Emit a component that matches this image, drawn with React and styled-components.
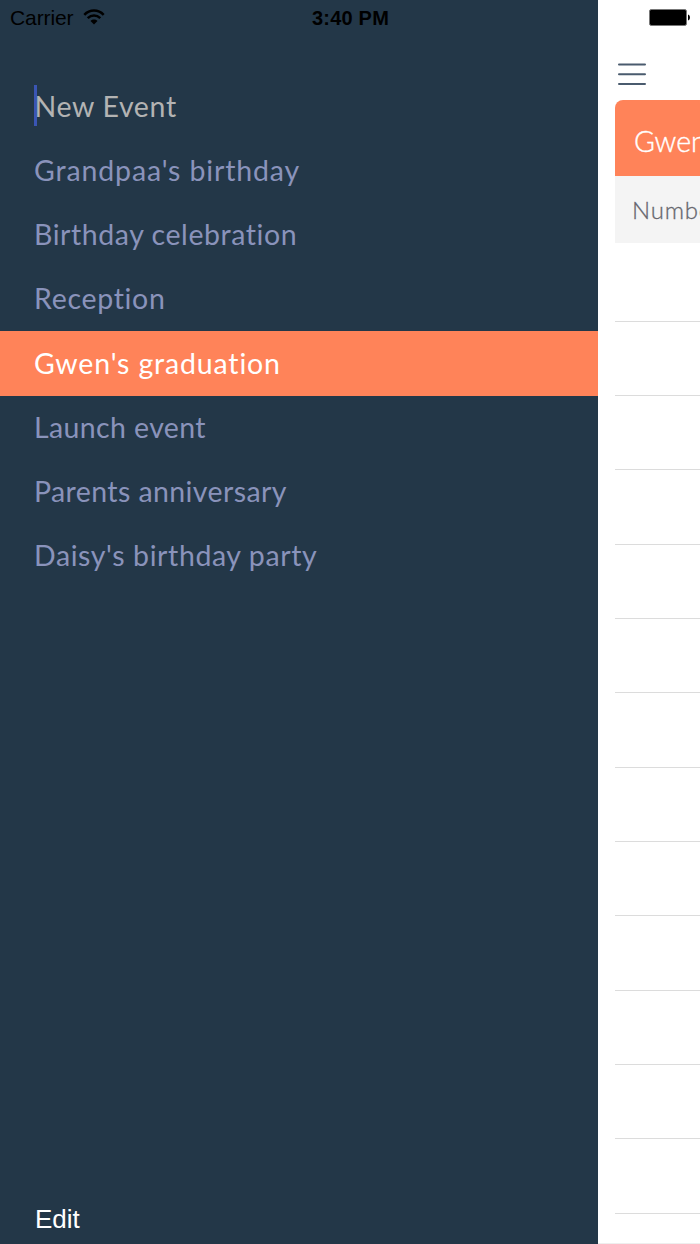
import React from 'react';
import styled, {createGlobalStyle, css} from 'styled-components';

const GlobalStyle = createGlobalStyle`
    * {
        box-sizing: border-box;
    }
    body {
        margin: 0;
        background: #fff;
    }
`

const bodyFont = css`
    font-family: Lato, "Noto Sans", sans-serif;
`

const systemFont = css`
    font-family: "Liberation Sans", Arial, sans-serif;
`

const Screen = styled.div`
    position: relative;
    display: flex;
    width: 700px;
    height: 1244px;
    overflow: hidden;
    background: #fff;
`

const StatusBar = styled.header`
    ${systemFont}
    position: absolute;
    top: 0;
    left: 0;
    right: 0;
    height: 36px;
    padding: 0 9px 0 10px;
    display: grid;
    grid-template-columns: 1fr auto 1fr;
    align-items: center;
    font-size: 21px;
    line-height: 36px;
    color: #000;
`

const Carrier = styled.div`
    display: flex;
    align-items: center;
    gap: 9.5px;
    letter-spacing: -0.1px;

    svg {
        margin-bottom: 2px;
    }
`

const Time = styled.div`
    font-size: 20px;
    font-weight: 700;
    letter-spacing: 0.2px;
`

const BatterySlot = styled.div`
    display: flex;
    justify-content: flex-end;
    padding-bottom: 2px;
`

const Drawer = styled.nav`
    ${bodyFont}
    flex: none;
    display: flex;
    flex-direction: column;
    justify-content: space-between;
    width: 598.4px;
    padding-top: 74px;
    background: #233748;
`

const EventList = styled.ul`
    margin: 0;
    padding: 0;
    list-style: none;
`

const EventRow = styled.li`
    display: flex;
    align-items: center;
    height: 64.2px;
    padding: 0 0 0.5px 34px;
    font-size: 28.5px;
    line-height: 40px;
    color: #8a93bb;
    white-space: nowrap;
    letter-spacing: ${props => props.$spacing}px;
    ${props => props.$selected && css`
        height: 65px;
        margin-bottom: -0.8px;
        background: #ff8359;
        color: #fff;
    `}
    ${props => props.$placeholder && css`
        color: #b3b3b3;
    `}
`

const Caret = styled.span`
    width: 3px;
    height: 41px;
    margin-right: -2.5px;
    background: #3a55b4;
`

const EditButton = styled.button`
    ${systemFont}
    align-self: flex-start;
    margin: 0 0 9px 35px;
    padding: 0;
    border: 0;
    background: none;
    font-size: 26px;
    line-height: 32px;
    color: #fff;
`

const Content = styled.main`
    ${bodyFont}
    flex: 1;
    min-width: 0;
    padding: 63px 0 0 16.6px;
    border-bottom: 1px solid #eee;
`

const MenuIcon = styled.svg`
    display: block;
    margin: 0 0 14px 3px;
`

const CardHeader = styled.div`
    height: 76px;
    padding-left: 19px;
    border-top-left-radius: 8px;
    background: #ff8359;
    font-size: 28.5px;
    font-weight: 300;
    line-height: 83px;
    white-space: nowrap;
    color: #fff;
    -webkit-text-stroke: 0.4px #fff;
`

const SubHeader = styled.div`
    height: 67px;
    padding-left: 17px;
    background: #f4f4f4;
    font-size: 24px;
    font-weight: 300;
    line-height: 67px;
    letter-spacing: 0.8px;
    white-space: nowrap;
    color: #66676e;
    -webkit-text-stroke: 0.3px #66676e;
`

const GuestRow = styled.div`
    height: ${props => props.$first ? 78.5 : 74.36}px;
    border-bottom: 1px solid #dcdcdc;
`

function WifiIcon() {
    return (
        <svg width="22" height="16" viewBox="0 0 22 16" fill="none" stroke="#000" strokeWidth="2.5">
            <path d="M1.3 5.8C6.7 .2 15.3 .2 20.7 5.8"/>
            <path d="M4.7 9.2C8.4 5.7 13.6 5.7 17.3 9.2"/>
            <path d="M7.5 11.9C9.5 10 12.5 10 14.5 11.9L11 15.5Z" fill="#000" stroke="none"/>
        </svg>
    );
}

function BatteryIcon() {
    return (
        <svg width="42" height="17" viewBox="0 0 42 17">
            <rect x=".5" y=".5" width="37" height="16" rx="1.8" fill="#000" stroke="#777"/>
            <path d="M39 5.5C41.6 6 41.6 11 39 11.5Z" fill="#000"/>
        </svg>
    );
}

const events = [
    {name: 'New Event', spacing: 0.65, placeholder: true},
    {name: "Grandpaa's birthday", spacing: 0.86},
    {name: 'Birthday celebration', spacing: 0.56},
    {name: 'Reception', spacing: 0.7},
    {name: "Gwen's graduation", spacing: 0.83, selected: true},
    {name: 'Launch event', spacing: 0.38},
    {name: 'Parents anniversary', spacing: 0.4},
    {name: "Daisy's birthday party", spacing: 0.6},
];

const guestRows = Array.from({length: 13}, (_, index) => index);

export default function App() {
    return (
        <Screen>
            <GlobalStyle/>
            <Drawer>
                <EventList>
                    {events.map(({name, spacing, selected, placeholder}) =>
                        <EventRow
                            key={name}
                            $spacing={spacing}
                            $selected={selected}
                            $placeholder={placeholder}>
                            {placeholder && <Caret/>}
                            {name}
                        </EventRow>
                    )}
                </EventList>
                <EditButton>Edit</EditButton>
            </Drawer>
            <Content>
                <MenuIcon width="28" height="23" viewBox="0 0 28 23" stroke="#4a5b6e" strokeWidth="2" strokeLinecap="round">
                    <path d="M1 1.6H27M1 11.3H27M1 21H27"/>
                </MenuIcon>
                <CardHeader>Gwen's graduation</CardHeader>
                <SubHeader>Number of guests</SubHeader>
                {guestRows.map(index =>
                    <GuestRow key={index} $first={index === 0}/>
                )}
            </Content>
            <StatusBar>
                <Carrier>
                    Carrier
                    <WifiIcon/>
                </Carrier>
                <Time>3:40 PM</Time>
                <BatterySlot>
                    <BatteryIcon/>
                </BatterySlot>
            </StatusBar>
        </Screen>
    );
}
